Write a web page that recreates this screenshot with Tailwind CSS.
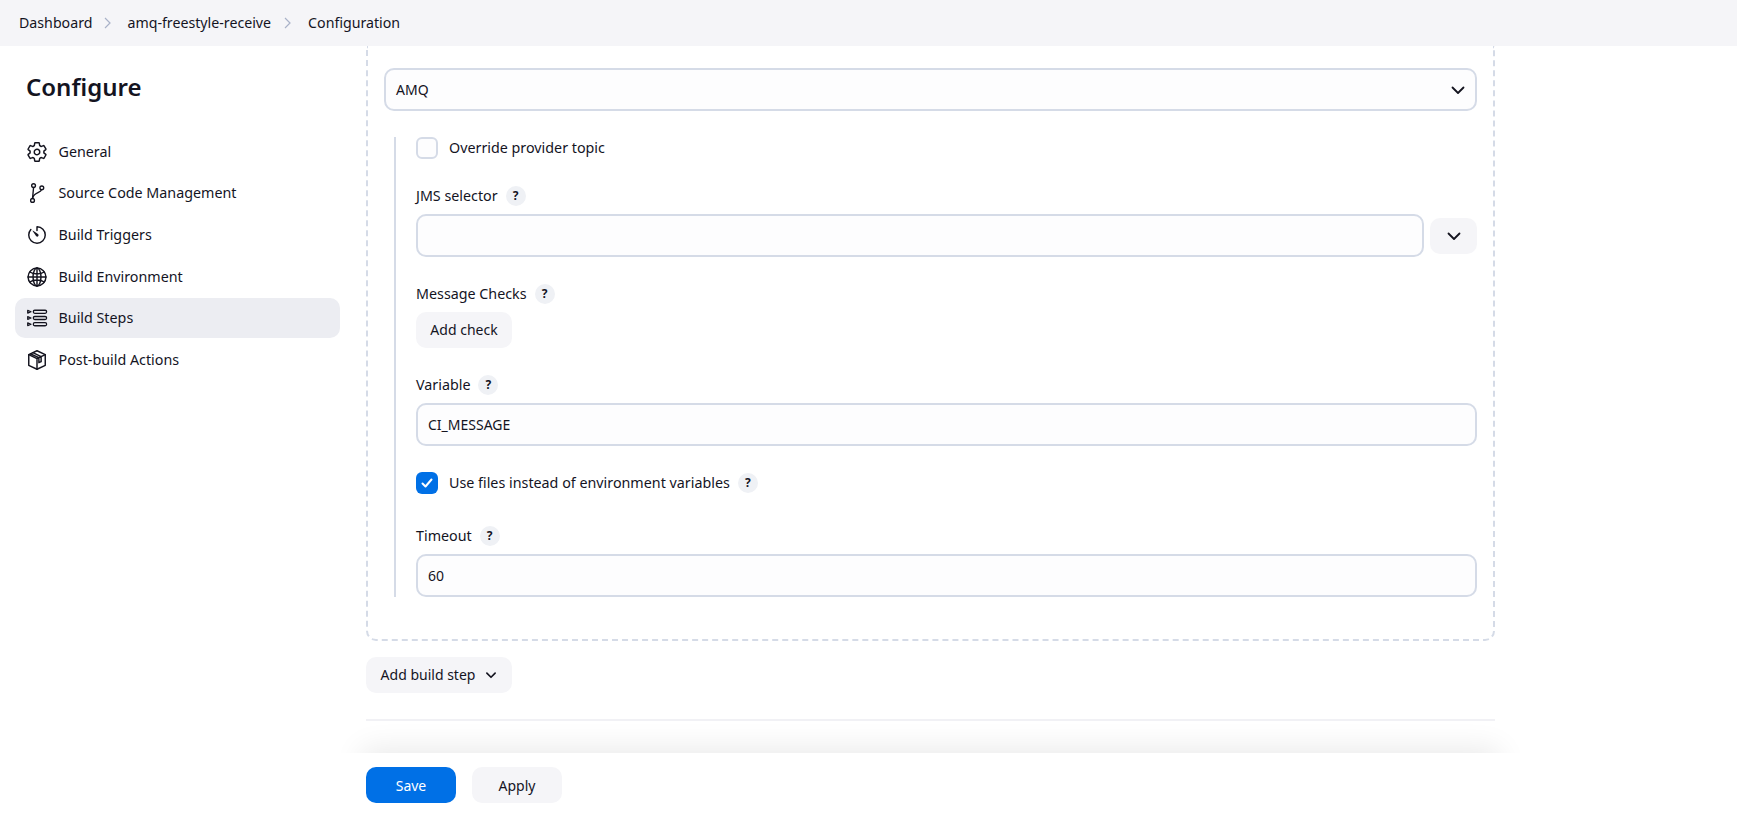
<!DOCTYPE html>
<html lang="en">
<head>
<meta charset="utf-8">
<title>Configuration</title>
<script src="https://cdn.jsdelivr.net/npm/@tailwindcss/browser@4"></script>
</head>
<body class="m-0 bg-white text-[#14141f] text-[14.3px] font-[450] font-['Noto_Sans',sans-serif]">
<div class="relative flex flex-col h-[816px] w-[1737px] overflow-hidden">
  <header class="flex items-center h-[46px] shrink-0 bg-[#f5f5f8] pl-[19px] pb-[1px] text-[14.2px]">
    <span>Dashboard</span>
    <svg class="w-[10px] h-[12px] mx-[11px] text-[#a9b2c8]" viewBox="0 0 10 12" fill="none" stroke="currentColor" stroke-width="1.2"><path d="M2 1l5 5-5 5"/></svg>
    <span class="ml-[3px]">amq-freestyle-receive</span>
    <svg class="w-[10px] h-[12px] mx-[12px] text-[#a9b2c8]" viewBox="0 0 10 12" fill="none" stroke="currentColor" stroke-width="1.2"><path d="M2 1l5 5-5 5"/></svg>
    <span class="ml-[3px]">Configuration</span>
  </header>
  <div class="flex flex-1 min-h-0">
    <aside class="w-[366px] shrink-0 pl-[15px]">
      <h1 class="pl-[11px] pt-[22px] h-[86px] text-[24px] leading-[38px] font-semibold">Configure</h1>
      <nav class="flex flex-col gap-[1.6px] w-[325px]">
        <a class="flex items-center h-[40px] pl-[11px] pb-[1px] gap-[10.5px] rounded-[10px]">
          <svg class="w-[22px] h-[22px]" viewBox="0 0 512 512" fill="none" stroke="currentColor" stroke-width="34" stroke-linecap="round" stroke-linejoin="round"><path d="M262.29 192.31a64 64 0 1057.4 57.4 64.13 64.13 0 00-57.4-57.4zM416.39 256a154.34 154.34 0 01-1.53 20.79l45.21 35.46a10.81 10.81 0 012.45 13.75l-42.77 74a10.81 10.81 0 01-13.14 4.59l-44.9-18.08a16.11 16.11 0 00-15.17 1.75A164.48 164.48 0 01325 400.8a15.94 15.94 0 00-8.82 12.14l-6.73 47.89a11.08 11.08 0 01-10.68 9.17h-85.54a11.11 11.11 0 01-10.69-8.87l-6.72-47.82a16.07 16.07 0 00-9-12.22 155.3 155.3 0 01-21.46-12.57 16 16 0 00-15.11-1.71l-44.89 18.07a10.81 10.81 0 01-13.14-4.58l-42.77-74a10.8 10.8 0 012.45-13.75l38.21-30a16.05 16.05 0 006-14.08c-.36-4.17-.58-8.33-.58-12.5s.21-8.27.58-12.35a16 16 0 00-6.07-13.94l-38.19-30A10.81 10.81 0 0149.48 186l42.77-74a10.81 10.81 0 0113.14-4.59l44.9 18.08a16.11 16.11 0 0015.17-1.75A164.48 164.48 0 01187 111.2a15.94 15.94 0 008.82-12.14l6.73-47.89A11.08 11.08 0 01213.23 42h85.54a11.11 11.11 0 0110.69 8.87l6.72 47.82a16.07 16.07 0 009 12.22 155.3 155.3 0 0121.46 12.57 16 16 0 0015.11 1.71l44.89-18.07a10.81 10.81 0 0113.14 4.58l42.77 74a10.8 10.8 0 01-2.45 13.75l-38.21 30a16.05 16.05 0 00-6.05 14.08c.33 4.14.55 8.3.55 12.47z"/></svg>
          General
        </a>
        <a class="flex items-center h-[40px] pl-[11px] pb-[2px] gap-[10.5px] rounded-[10px]">
          <svg class="w-[22px] h-[22px]" viewBox="0 0 512 512" fill="none" stroke="currentColor" stroke-width="32" stroke-linecap="round" stroke-linejoin="round"><circle cx="176" cy="84" r="44"/><circle cx="152" cy="428" r="44"/><path d="M176 128l-24 256"/><circle cx="368" cy="136" r="44"/><path d="M360 180c-8 72-180 68-200 180"/></svg>
          Source Code Management
        </a>
        <a class="flex items-center h-[40px] pl-[11px] pb-[1px] gap-[10.5px] rounded-[10px]">
          <svg class="w-[22px] h-[22px]" viewBox="0 0 512 512" fill="none" stroke="currentColor" stroke-width="34" stroke-linecap="round" stroke-linejoin="round"><path d="M112.91 128A191.85 191.85 0 0064 254c-1.18 106.35 85.65 193.8 192 194 106.2.2 192-85.83 192-192 0-104.54-83.55-189.61-187.5-192a4.36 4.36 0 00-4.5 4.37V152"/><path fill="currentColor" stroke="none" d="M233.38 278.63l-79-113a8.13 8.13 0 0111.32-11.32l113 79a32.5 32.5 0 01-37.25 53.26 33.21 33.21 0 01-8.07-7.94z"/></svg>
          Build Triggers
        </a>
        <a class="flex items-center h-[40px] pl-[11px] gap-[10.5px] rounded-[10px]">
          <svg class="w-[22px] h-[22px]" viewBox="0 0 512 512" fill="none" stroke="currentColor" stroke-width="34" stroke-linecap="round" stroke-linejoin="round"><circle cx="256" cy="256" r="208"/><ellipse cx="256" cy="256" rx="92" ry="208"/><path d="M256 48v416M48 256h416M88 140c44 30 104 44 168 44s124-14 168-44M88 372c44-30 104-44 168-44s124 14 168 44"/></svg>
          Build Environment
        </a>
        <a class="flex items-center h-[40px] pl-[11px] pb-[1px] gap-[10.5px] rounded-[10px] bg-[#ecedf2]">
          <svg class="w-[22px] h-[22px]" viewBox="0 0 512 512" fill="none" stroke="currentColor" stroke-width="30" stroke-linecap="round" stroke-linejoin="round"><rect x="170" y="76" width="310" height="70" rx="35"/><rect x="170" y="221" width="310" height="70" rx="35"/><rect x="170" y="366" width="310" height="70" rx="35"/><path d="M40 80l76 31-76 31zM40 225l76 31-76 31zM40 370l76 31-76 31z"/></svg>
          Build Steps
        </a>
        <a class="flex items-center h-[40px] pl-[11px] gap-[10.5px] rounded-[10px]">
          <svg class="w-[22px] h-[22px]" viewBox="0 0 512 512" fill="none" stroke="currentColor" stroke-width="34" stroke-linecap="round" stroke-linejoin="round"><path d="M256 40L64 132v248l192 92 192-92V132z"/><path d="M64 132l192 92 192-92M256 224v248M160 86l192 92v116l-52 24V202L108 112"/></svg>
          Post-build Actions
        </a>
      </nav>
    </aside>
    <main class="w-[1129px] shrink-0">
      <section class="h-[595px] border-2 border-t-0 border-dashed border-[#d5dbe7] rounded-b-[10px] px-[16px] pt-[22px]">
        <div class="relative flex items-center h-[43px] pl-[10px] pb-[1px] text-[14px] border-2 border-[#d5dbe7] rounded-[10px] bg-[#fdfdfe]">
          AMQ
          <svg class="absolute right-[9px] top-[12px] w-[16px] h-[16px]" viewBox="0 0 16 16" fill="none" stroke="currentColor" stroke-width="1.8" stroke-linecap="round" stroke-linejoin="round"><path d="M2.5 5.5L8 11l5.5-5.5"/></svg>
        </div>
        <div class="mt-[26px] ml-[10px] pl-[20px] border-l-2 border-[#d5dbe7] h-[460px]">
          <label class="flex items-center h-[22px] pb-[1px] gap-[11px]">
            <span class="w-[22px] h-[22px] border-2 border-[#d5dbe7] rounded-[6px] bg-[#fdfdfe]"></span>
            Override provider topic
          </label>
          <div class="flex items-center h-[24px] mt-[25px] mb-[6px] gap-[8px]">JMS selector <span class="flex items-center justify-center w-[20px] h-[20px] rounded-full bg-[#eff1f5] text-[12px] font-bold">?</span></div>
          <div class="flex items-center gap-[6px]">
            <div class="flex-1 h-[43px] border-2 border-[#d5dbe7] rounded-[10px] bg-[#fdfdfe]"></div>
            <button class="flex items-center justify-center w-[47px] h-[36px] rounded-[10px] bg-[#f5f5f8]"><svg class="w-[16px] h-[16px]" viewBox="0 0 16 16" fill="none" stroke="currentColor" stroke-width="1.8" stroke-linecap="round" stroke-linejoin="round"><path d="M2.5 5.5L8 11l5.5-5.5"/></svg></button>
          </div>
          <div class="flex items-center h-[24px] mt-[25px] mb-[6px] pb-[1px] gap-[8px]">Message Checks <span class="flex items-center justify-center w-[20px] h-[20px] rounded-full bg-[#eff1f5] text-[12px] font-bold">?</span></div>
          <button class="flex items-center justify-center w-[96px] h-[36px] pb-[1px] rounded-[10px] bg-[#f5f5f8] text-[14px]">Add check</button>
          <div class="flex items-center h-[24px] mt-[25px] mb-[6px] pb-[1px] gap-[8px]">Variable <span class="flex items-center justify-center w-[20px] h-[20px] rounded-full bg-[#eff1f5] text-[12px] font-bold">?</span></div>
          <div class="flex items-center h-[43px] pl-[10px] text-[14px] border-2 border-[#d5dbe7] rounded-[10px] bg-[#fdfdfe]">CI_MESSAGE</div>
          <label class="flex items-center h-[22px] mt-[26px] pb-[1px]">
            <span class="flex items-center justify-center w-[22px] h-[22px] rounded-[6px] bg-[#0070e6]"><svg class="w-[14px] h-[14px]" viewBox="0 0 14 14" fill="none" stroke="white" stroke-width="2" stroke-linecap="round" stroke-linejoin="round"><path d="M2.5 7.5l3 3 6-7"/></svg></span>
            <span class="ml-[11px] mr-[8px]">Use files instead of environment variables</span>
            <span class="flex items-center justify-center w-[20px] h-[20px] rounded-full bg-[#eff1f5] text-[12px] font-bold">?</span>
          </label>
          <div class="flex items-center h-[24px] mt-[30px] mb-[6px] pb-[1px] gap-[8px]">Timeout <span class="flex items-center justify-center w-[20px] h-[20px] rounded-full bg-[#eff1f5] text-[12px] font-bold">?</span></div>
          <div class="flex items-center h-[43px] pl-[10px] text-[14px] border-2 border-[#d5dbe7] rounded-[10px] bg-[#fdfdfe]">60</div>
        </div>
      </section>
      <button class="flex items-center justify-center gap-[10px] w-[146px] h-[36px] mt-[16px] pb-[1px] text-[14px] rounded-[10px] bg-[#f5f5f8]">Add build step <svg class="w-[12px] h-[12px]" viewBox="0 0 16 16" fill="none" stroke="currentColor" stroke-width="2.2" stroke-linecap="round" stroke-linejoin="round"><path d="M2.5 5.5L8 11l5.5-5.5"/></svg></button>
      <hr class="mt-[26px] border-0 h-[2px] bg-[#f1f1f5]">
    </main>
  </div>
  <div class="absolute left-[366px] top-[753px] w-[1129px] h-[30px] z-10 shadow-[0_0_30px_4px_rgba(0,0,0,0.09)]"></div>
  <footer class="relative z-20 flex items-start gap-[16px] h-[63px] shrink-0 bg-white pl-[366px] pt-[14px]">
    <button class="w-[90px] h-[36px] rounded-[10px] bg-[#0070e6] text-white text-[14px]">Save</button>
    <button class="w-[90px] h-[36px] rounded-[10px] bg-[#f5f5f8] text-[14px]">Apply</button>
  </footer>
</div>
</body>
</html>
